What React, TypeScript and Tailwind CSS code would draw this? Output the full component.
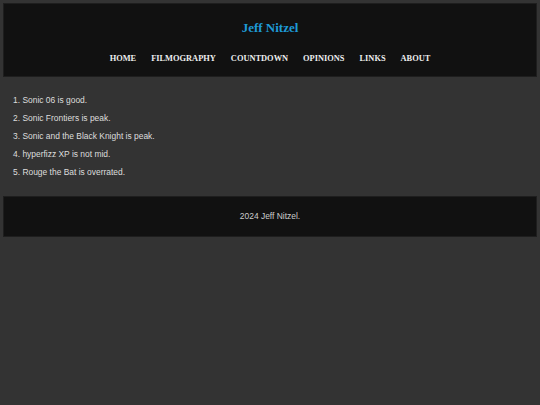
import React from "react";

const items = [
  "1. Sonic 06 is good.",
  "2. Sonic Frontiers is peak.",
  "3. Sonic and the Black Knight is peak.",
  "4. hyperfizz XP is not mid.",
  "5. Rouge the Bat is overrated.",
];

const nav = ["HOME", "FILMOGRAPHY", "COUNTDOWN", "OPINIONS", "LINKS", "ABOUT"];

export default function App() {
  return (
    <div className="min-h-[405px] w-full bg-[#333333] p-[3px]">
      <header className="h-[74px] border border-[#1e1e1e] bg-[#111111] flex flex-col items-center font-['Liberation_Serif','Times_New_Roman',serif]">
        <h1 className="mt-[15.5px] h-[15px] leading-[15px] text-[13px] font-bold text-[#1e9ad6]">
          Jeff Nitzel
        </h1>
        <nav className="mt-[19px] flex gap-[15px] h-[10px] leading-[10px] text-[8.4px] font-bold text-[#eeeeee]">
          {nav.map((n) => (
            <span key={n}>{n}</span>
          ))}
        </nav>
      </header>
      <main className="pt-[14px] pb-[15px] pl-[10px] flex flex-col text-[8.45px] text-[#dddddd] font-['Liberation_Sans',Arial,sans-serif]">
        {items.map((t) => (
          <p key={t} className="h-[18px] leading-[18px]">
            {t}
          </p>
        ))}
      </main>
      <footer className="h-[41px] border border-[#1e1e1e] bg-[#111111] flex items-center justify-center text-[8.45px] text-[#cccccc] font-['Liberation_Sans',Arial,sans-serif]">
        2024 Jeff Nitzel.
      </footer>
    </div>
  );
}
